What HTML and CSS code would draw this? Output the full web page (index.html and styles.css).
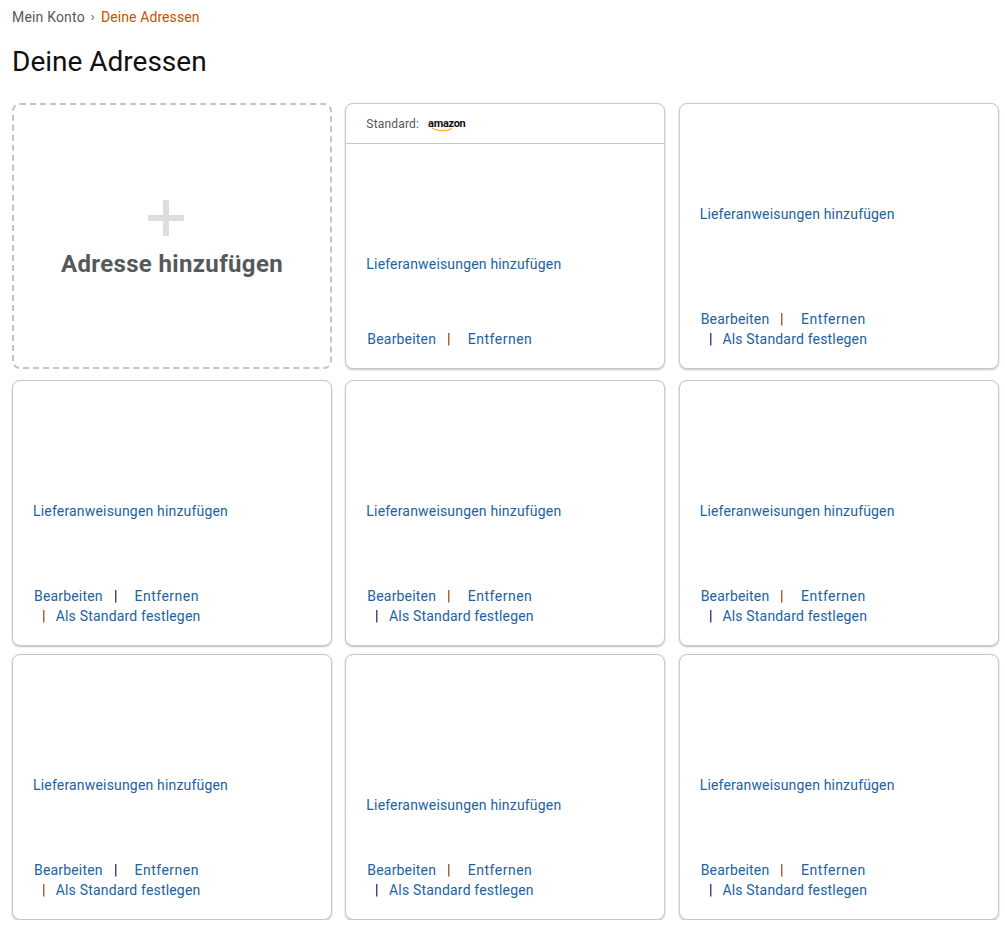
FILE: index.html
```html
<!DOCTYPE html>
<html lang="de">
<head>
<meta charset="utf-8">
<title>Deine Adressen</title>
<link rel="stylesheet" href="styles.css">
</head>
<body>
<nav class="crumbs"><a class="crumb">Mein Konto</a><span class="crumb-sep">›</span><span class="crumb-current">Deine Adressen</span></nav>
<h1 class="title">Deine Adressen</h1>
<main class="grid">
  <a class="card add">
    <span class="plus"></span>
    <span class="add-label">Adresse hinzufügen</span>
  </a>
  <section class="card">
    <header class="card-head"><span>Standard:</span>
      <span class="logo"><span class="logo-word">amazon</span><svg class="smile" width="24" height="5" viewBox="0 0 24 5"><path d="M1 1c6 3.600 14 3.600 20 .6" fill="none" stroke="#f90" stroke-width="1"/></svg></span>
    </header>
    <div class="body gap-121"><a class="link">Lieferanweisungen hinzufügen</a></div>
    <div class="actions single"><div class="line"><a class="link">Bearbeiten</a><span class="sep brown">|</span><a class="link remove">Entfernen</a></div></div>
  </section>
  <section class="card">
    <div class="body gap-111"><a class="link">Lieferanweisungen hinzufügen</a></div>
    <div class="actions"><div class="line"><a class="link">Bearbeiten</a><span class="sep brown">|</span><a class="link remove">Entfernen</a></div><div class="line second"><span class="sep navy">|</span><a class="link">Als Standard festlegen</a></div></div>
  </section>

  <section class="card">
    <div class="body gap-131"><a class="link">Lieferanweisungen hinzufügen</a></div>
    <div class="actions"><div class="line"><a class="link">Bearbeiten</a><span class="sep navy">|</span><a class="link remove">Entfernen</a></div><div class="line second"><span class="sep brown">|</span><a class="link">Als Standard festlegen</a></div></div>
  </section>
  <section class="card">
    <div class="body gap-131"><a class="link">Lieferanweisungen hinzufügen</a></div>
    <div class="actions"><div class="line"><a class="link">Bearbeiten</a><span class="sep brown">|</span><a class="link remove">Entfernen</a></div><div class="line second"><span class="sep navy">|</span><a class="link">Als Standard festlegen</a></div></div>
  </section>
  <section class="card">
    <div class="body gap-131"><a class="link">Lieferanweisungen hinzufügen</a></div>
    <div class="actions"><div class="line"><a class="link">Bearbeiten</a><span class="sep brown">|</span><a class="link remove">Entfernen</a></div><div class="line second"><span class="sep navy">|</span><a class="link">Als Standard festlegen</a></div></div>
  </section>

  <section class="card">
    <div class="body gap-131"><a class="link">Lieferanweisungen hinzufügen</a></div>
    <div class="actions"><div class="line"><a class="link">Bearbeiten</a><span class="sep navy">|</span><a class="link remove">Entfernen</a></div><div class="line second"><span class="sep brown">|</span><a class="link">Als Standard festlegen</a></div></div>
  </section>
  <section class="card">
    <div class="body gap-151"><a class="link">Lieferanweisungen hinzufügen</a></div>
    <div class="actions"><div class="line"><a class="link">Bearbeiten</a><span class="sep brown">|</span><a class="link remove">Entfernen</a></div><div class="line second"><span class="sep navy">|</span><a class="link">Als Standard festlegen</a></div></div>
  </section>
  <section class="card">
    <div class="body gap-131"><a class="link">Lieferanweisungen hinzufügen</a></div>
    <div class="actions"><div class="line"><a class="link">Bearbeiten</a><span class="sep brown">|</span><a class="link remove">Entfernen</a></div><div class="line second"><span class="sep navy">|</span><a class="link">Als Standard festlegen</a></div></div>
  </section>
</main>
</body>
</html>
```
FILE: styles.css
```css
* { box-sizing: border-box; }
html, body { margin: 0; background: #fff; }
body {
  padding: 7px 6px 0 12px;
  font-family: Roboto, "Noto Sans", sans-serif;
  font-size: 14px;
  line-height: 20px;
  letter-spacing: .18px;
  color: #0f1111;
}
.crumbs { display: flex; align-items: center; height: 20px; color: #565959; }
.crumb-sep { margin: 0 6px; font-size: 13px; }
.crumb-current { color: #c45500; letter-spacing: .1px; }
.title { margin: 17px 0 0; font-size: 28px; line-height: 36px; font-weight: 400; letter-spacing: 0; }
.grid {
  margin-top: 23px;
  display: grid;
  grid-template-columns: repeat(3, 320px);
  grid-template-rows: 269px 266px 266px;
  align-items: start;
  column-gap: 13.33px;
  row-gap: 8px;
}
.card {
  display: flex;
  flex-direction: column;
  height: 266px;
  border: 1px solid #c8c8c8;
  border-radius: 8px;
  background: #fff;
  box-shadow: 0 1px 2px rgba(15, 17, 17, .25);
}
.add {
  align-items: center;
  border: 2px dashed #c4c4c4;
  box-shadow: none;
  padding-top: 95px;
}
.plus {
  width: 36px;
  height: 36px;
  margin-right: 12px;
  background:
    linear-gradient(#ddd, #ddd) center / 36px 6px no-repeat,
    linear-gradient(#ddd, #ddd) center / 6px 36px no-repeat;
}
.add-label { margin-top: 12px; font-size: 24px; line-height: 32px; font-weight: 700; letter-spacing: .35px; color: #565959; }
.card-head {
  display: flex;
  align-items: center;
  gap: 9px;
  height: 40px;
  padding: 0 20px;
  border-bottom: 1px solid #c8c8c8;
  font-size: 12px;
  color: #565959;
}
.logo { display: flex; flex-direction: column; height: 16px; width: 38px; position: relative; }
.logo-word { font-size: 11px; line-height: 15px; font-weight: 700; color: #111; letter-spacing: -.3px; }
.smile { position: absolute; left: 3px; top: 11px; }
.body { padding: 0 20px; }
.gap-111 { padding-top: 100px; }
.gap-121 { padding-top: 110px; }
.gap-131 { padding-top: 120px; }
.gap-151 { padding-top: 140px; }
.link { color: #2162a1; white-space: nowrap; }
.remove { letter-spacing: .5px; }
.actions { margin-top: auto; padding: 0 21px 19px; }
.line { display: flex; align-items: center; height: 20px; }
.second { padding-left: 8px; }
.sep { margin: 0 17px 0 11px; font-weight: 700; will-change: transform; }
.second .sep { margin: 0 10px 0 0; }
.brown { color: #8f3f0a; }
.navy { color: #10206a; }
```
